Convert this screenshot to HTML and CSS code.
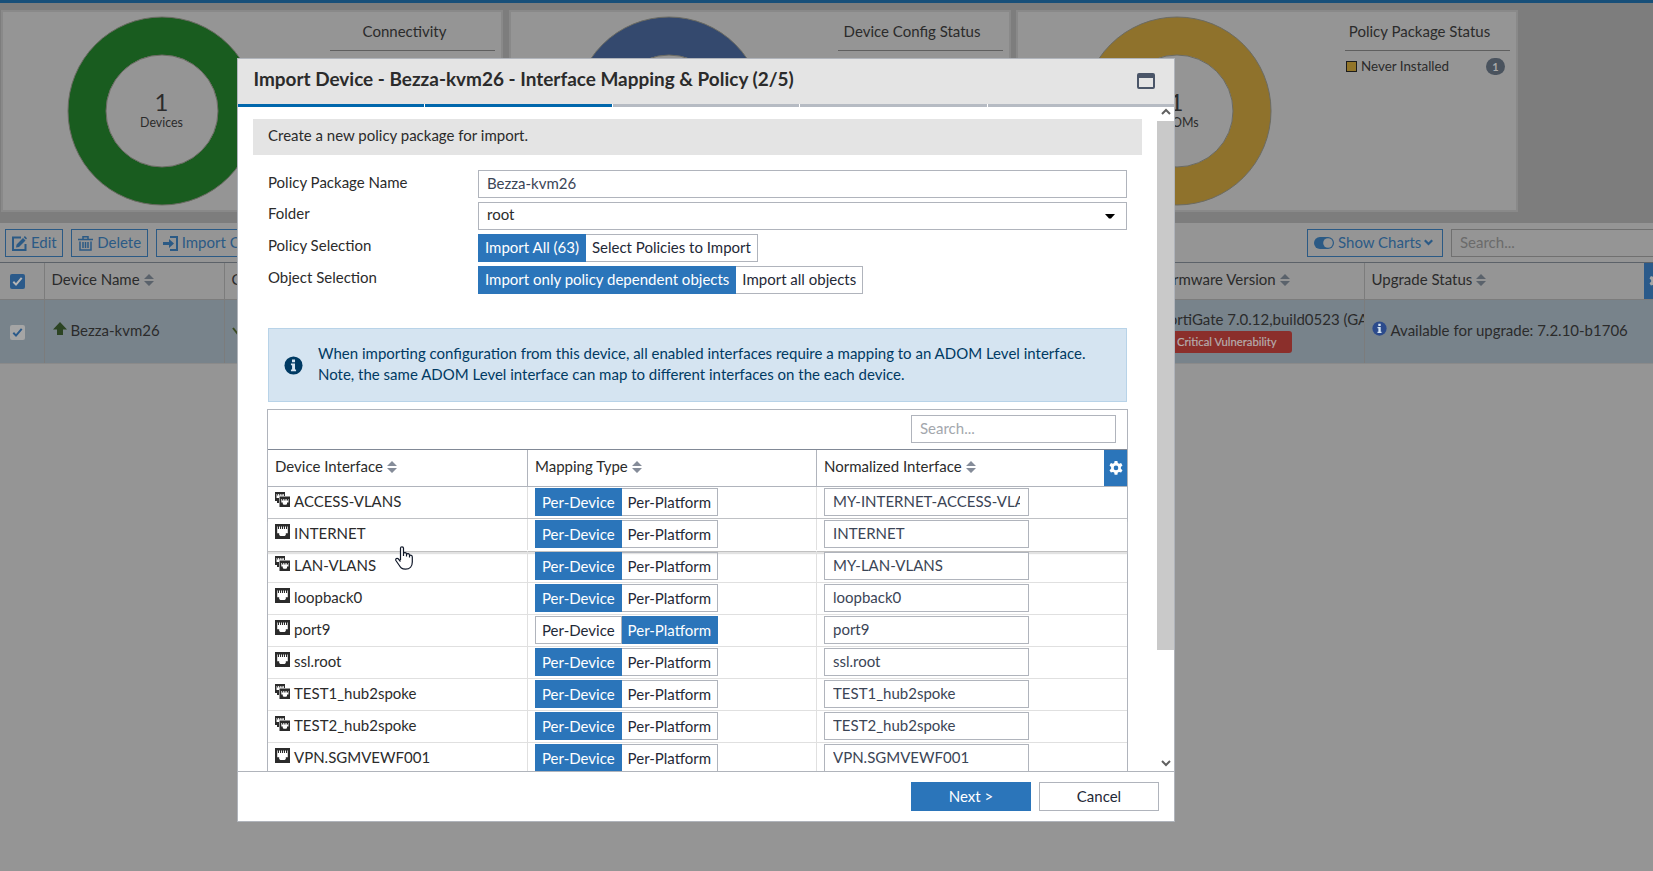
FILE: index.html
```html
<!DOCTYPE html>
<html lang="en">
<head>
<meta charset="utf-8">
<title>Import Device</title>
<link rel="stylesheet" href="styles.css">
</head>
<body>
<svg class="defs" aria-hidden="true">
  <symbol id="sort" viewBox="0 0 10 12"><path d="M0 5 5 0 10 5ZM0 7H10L5 12Z"/></symbol>
  <symbol id="gear" viewBox="0 0 16 16"><path fill-rule="evenodd" d="M6.600 1h2.800l.4 2.100 1.300.7 2-.7 1.400 2.400-1.600 1.400v1.900l1.600 1.400-1.400 2.400-2-.7-1.300.7-.4 2.100H6.600l-.4-2.100-1.300-.7-2 .7-1.400-2.400 1.600-1.400V7.100L1.500 5.500 2.900 3.100l2 .7 1.300-.7ZM8 5.600a2.300 2.300 0 1 0 0 4.600 2.300 2.300 0 0 0 0-4.600Z"/></symbol>
  <symbol id="port" viewBox="0 0 15 15"><path fill-rule="evenodd" d="M0 0H15V15H0ZM2.200 2.500V9.300H4.200V11L5.300 12H9.700L10.800 11V9.300H12.800V2.500H12.100V5H11V2.500H10V5H8.900V2.500H8V5H7V2.500H6.100V5H5V2.500H4V5H2.900V2.500Z"/></symbol>
  <symbol id="ports" viewBox="0 0 15 15"><path d="M0 0H10V4H9V2H8.300V3.500H7.500V2H6.600V3.500H5.700V2H4.800V3.500H3.900V2H3V3.500H2.200V2H1.500V6H4V11H2V9H0Z"/><path fill-rule="evenodd" d="M4.500 4.500H15V15H4.500ZM6.300 7V10.500H7.800V12L8.600 12.700H11.200L12 12V10.500H13.500V7H13V8.500H12V7H11.400V8.500H10.500V7H9.700V8.500H8.800V7H8.100V8.500H7.100V7Z"/></symbol>
  <symbol id="info" viewBox="0 0 20 20"><circle cx="10" cy="10" r="9.500"/><path class="info-i" d="M8.400 3.800h3.200v2.700H8.400ZM7.300 8h4.300v6.200h1.100V16H7.300v-1.800h1.200V9.700H7.300Z"/></symbol>
  <symbol id="check" viewBox="0 0 15 15"><path d="M3.300 7.800 6 10.600 11.700 3.800" fill="none" stroke="currentColor" stroke-width="2"/></symbol>
</svg>

<div class="page">
  <div class="topline"></div>
  <section class="charts">
    <div class="card">
      <div class="donut donut-green">
        <svg viewBox="0 0 190 190"><circle cx="95" cy="95" r="75"/><circle class="edge" cx="95" cy="95" r="94"/><circle class="edge" cx="95" cy="95" r="56"/></svg>
        <div class="donut-label"><b>1</b><span>Devices</span></div>
      </div>
      <div class="legend"><h3>Connectivity</h3></div>
    </div>
    <div class="card">
      <div class="donut donut-blue">
        <svg viewBox="0 0 190 190"><circle cx="95" cy="95" r="75"/><circle class="edge" cx="95" cy="95" r="94"/><circle class="edge" cx="95" cy="95" r="56"/></svg>
      </div>
      <div class="legend"><h3>Device Config Status</h3></div>
    </div>
    <div class="card">
      <div class="donut donut-gold">
        <svg viewBox="0 0 190 190"><circle cx="95" cy="95" r="75"/><circle class="edge" cx="95" cy="95" r="94"/><circle class="edge" cx="95" cy="95" r="56"/></svg>
        <div class="donut-label"><b>1</b><span>ADOMs</span></div>
      </div>
      <div class="legend"><h3>Policy Package Status</h3>
        <div class="legend-row"><i class="swatch"></i><span>Never Installed</span><em>1</em></div>
      </div>
    </div>
  </section>

  <div class="toolbar">
    <div class="tool"><svg width="15" height="15" viewBox="0 0 15 15"><path d="M9 1.500H1V14H13.500V8" fill="none" stroke="currentColor" stroke-width="2"/><path d="M4 11.500 4.600 8.500 11 2 13.500 4.400 7 10.900ZM11.700 1.200 12.900 0 15 2.300 14 3.600Z" fill="currentColor"/></svg><span>Edit</span></div>
    <div class="tool"><svg width="15" height="15" viewBox="0 0 15 15"><path d="M0 3.500H15M5 3V.800H10V3M2 5.500V14H13V5.500M5 6V12M7.500 6V12M10 6V12" fill="none" stroke="currentColor" stroke-width="1.500"/></svg><span>Delete</span></div>
    <div class="tool"><svg width="15" height="15" viewBox="0 0 15 15"><path d="M7 1H14V14H7" fill="none" stroke="currentColor" stroke-width="2"/><path d="M0 6H6V3L11 7.500 6 12V9H0Z" fill="currentColor"/></svg><span>Import Config</span></div>
    <div class="tool tool-charts"><svg width="20" height="12" viewBox="0 0 20 12"><rect width="20" height="12" rx="6" fill="currentColor"/><circle class="knob" cx="14" cy="6" r="4.800"/></svg><span>Show Charts</span><svg class="chev" width="9" height="7" viewBox="0 0 9 7"><path d="M.800 1.200 4.500 5 8.200 1.200" fill="none" stroke="currentColor" stroke-width="2.200"/></svg></div>
    <div class="bg-search">Search...</div>
  </div>

  <div class="grid grid-head">
    <div class="cell cell-check"><svg class="box box-on"><use href="#check"/></svg></div>
    <div class="cell">Device Name<svg class="sort"><use href="#sort"/></svg></div>
    <div class="cell">Config Status</div>
    <div class="cell cell-fw">Firmware Version<svg class="sort"><use href="#sort"/></svg></div>
    <div class="cell">Upgrade Status<svg class="sort"><use href="#sort"/></svg></div>
    <div class="bg-gear"><svg><use href="#gear"/></svg></div>
  </div>
  <div class="grid grid-row">
    <div class="cell cell-check"><svg class="box"><use href="#check"/></svg></div>
    <div class="cell"><svg class="up" width="14" height="13" viewBox="0 0 14 13"><path d="M7 0 14 7.500H10V13H4V7.500H0Z"/></svg>Bezza-kvm26</div>
    <div class="cell"><svg class="sync" width="12" height="10" viewBox="0 0 12 10"><path d="M1 3 5 8 11 1" fill="none" stroke="currentColor" stroke-width="2"/></svg></div>
    <div class="cell cell-fw"><div>FortiGate 7.0.12,build0523 (GA)</div><div class="vuln">Critical Vulnerability</div></div>
    <div class="cell"><svg class="info info-up"><use href="#info"/></svg>Available for upgrade: 7.2.10-b1706</div>
  </div>
</div>

<div class="modal">
  <header class="modal-head">
    <h2>Import Device - Bezza-kvm26 - Interface Mapping &amp; Policy (2/5)</h2>
    <svg width="18" height="16" viewBox="0 0 18 16"><rect x="1" y="1" width="16" height="14" rx="1" fill="none" stroke="#4a5568" stroke-width="2"/><path d="M1 1H17V5H1Z" fill="#4a5568"/></svg>
  </header>
  <div class="steps"><i class="done"></i><i class="done"></i><i></i><i></i><i></i></div>
  <div class="modal-body">
    <div class="content">
      <div class="banner">Create a new policy package for import.</div>
      <div class="form">
        <label>Policy Package Name</label><div class="field">Bezza-kvm26</div>
        <label>Folder</label><div class="field select">root<svg width="10" height="5" viewBox="0 0 10 5"><path d="M0 0H10L6 4.500H4Z"/></svg></div>
        <label>Policy Selection</label><div class="seg"><span class="on">Import All (63)</span><span>Select Policies to Import</span></div>
        <label>Object Selection</label><div class="seg"><span class="on">Import only policy dependent objects</span><span>Import all objects</span></div>
      </div>
      <div class="notice"><svg class="info"><use href="#info"/></svg><p>When importing configuration from this device, all enabled interfaces require a mapping to an ADOM Level interface.<br>Note, the same ADOM Level interface can map to different interfaces on the each device.</p></div>
      <div class="table">
        <div class="table-tools"><div class="search">Search...</div></div>
        <div class="tr th">
          <div>Device Interface<svg class="sort"><use href="#sort"/></svg></div>
          <div>Mapping Type<svg class="sort"><use href="#sort"/></svg></div>
          <div>Normalized Interface<svg class="sort"><use href="#sort"/></svg></div>
          <div class="gear"><svg><use href="#gear"/></svg></div>
        </div>
        <div class="tr above"><div><svg class="if"><use href="#ports"/></svg>ACCESS-VLANS</div><div class="seg"><span class="on">Per-Device</span><span>Per-Platform</span></div><div><div class="norm"><span>MY-INTERNET-ACCESS-VLANS</span></div></div></div>
        <div class="tr hover"><div><svg class="if"><use href="#port"/></svg>INTERNET</div><div class="seg"><span class="on">Per-Device</span><span>Per-Platform</span></div><div><div class="norm"><span>INTERNET</span></div></div></div>
        <div class="tr"><div><svg class="if"><use href="#ports"/></svg>LAN-VLANS</div><div class="seg"><span class="on">Per-Device</span><span>Per-Platform</span></div><div><div class="norm"><span>MY-LAN-VLANS</span></div></div></div>
        <div class="tr"><div><svg class="if"><use href="#port"/></svg>loopback0</div><div class="seg"><span class="on">Per-Device</span><span>Per-Platform</span></div><div><div class="norm"><span>loopback0</span></div></div></div>
        <div class="tr"><div><svg class="if"><use href="#port"/></svg>port9</div><div class="seg"><span>Per-Device</span><span class="on">Per-Platform</span></div><div><div class="norm"><span>port9</span></div></div></div>
        <div class="tr"><div><svg class="if"><use href="#port"/></svg>ssl.root</div><div class="seg"><span class="on">Per-Device</span><span>Per-Platform</span></div><div><div class="norm"><span>ssl.root</span></div></div></div>
        <div class="tr"><div><svg class="if"><use href="#ports"/></svg>TEST1_hub2spoke</div><div class="seg"><span class="on">Per-Device</span><span>Per-Platform</span></div><div><div class="norm"><span>TEST1_hub2spoke</span></div></div></div>
        <div class="tr"><div><svg class="if"><use href="#ports"/></svg>TEST2_hub2spoke</div><div class="seg"><span class="on">Per-Device</span><span>Per-Platform</span></div><div><div class="norm"><span>TEST2_hub2spoke</span></div></div></div>
        <div class="tr"><div><svg class="if"><use href="#port"/></svg>VPN.SGMVEWF001</div><div class="seg"><span class="on">Per-Device</span><span>Per-Platform</span></div><div><div class="norm"><span>VPN.SGMVEWF001</span></div></div></div>
      </div>
    </div>
    <div class="scroll">
      <svg width="10" height="7" viewBox="0 0 10 7"><path d="M1 6 5 2 9 6" fill="none" stroke="#606060" stroke-width="2"/></svg>
      <i class="thumb"></i>
      <svg class="down" width="10" height="7" viewBox="0 0 10 7"><path d="M1 1 5 5 9 1" fill="none" stroke="#606060" stroke-width="2"/></svg>
    </div>
  </div>
  <footer class="modal-foot"><div class="btn primary">Next &gt;</div><div class="btn">Cancel</div></footer>
</div>

<svg class="pointer" viewBox="0 0 18 24"><path d="M5.500 14V2.300C5.500.300 8.500.300 8.500 2.300V9M8.500 10V7.500C9 6 11.300 6.300 11.500 8V10.500M11.500 10V8.500C12.200 7.200 14.200 7.500 14.500 9V11.500M14.500 11V9.800C15.200 8.800 17.300 9 17.300 11V16C17.300 20 15 23.200 10.500 23.200 6.500 23.200 5.500 21.500 4 19L.900 14.500C.200 12.800 2 11.700 3.300 12.800L5.500 15.500" fill="#fff" stroke="#0f1728" stroke-width="1.200" stroke-linejoin="round"/></svg>
</body>
</html>
```
FILE: styles.css
```css
* { box-sizing: border-box; }
html, body { margin: 0; height: 100%; overflow: hidden; }
body { background: #959595; color: #2b2b2b; font: 15px/18px Lato, "Open Sans", sans-serif; white-space: nowrap; }
h2, h3, p { margin: 0; font-weight: 400; }
svg { flex: none; display: block; }
.defs { position: absolute; width: 0; height: 0; }

.page { width: 1653px; height: 871px; overflow: hidden; }
.topline { height: 3px; background: #174f79; }
.charts { display: flex; gap: 5.500px; height: 220px; padding: 7px 0 0 1px; background: #7d7d7d; }
.card { display: flex; flex: none; width: 502px; height: 202px; padding: 4px 0 0 64px; background: #959595; border: 2px solid #898989; }
.donut { position: relative; left: -.5px; width: 190px; height: 190px; }
.donut circle { fill: none; stroke-width: 38px; }
.donut .edge { stroke: #6b6b63; stroke-width: 1px; }
.donut-green circle:first-child { stroke: #195c1f; }
.donut-blue circle:first-child { stroke: #34496e; }
.donut-gold circle:first-child { stroke: #8f722c; }
.donut-label { position: absolute; inset: 73px 0 0; display: flex; flex-direction: column; align-items: center; font-size: 12.400px; line-height: 15px; }
.donut-label b { font-size: 24px; font-weight: 400; line-height: 26px; }
.legend { width: 165px; margin-left: 73px; }
.legend h3 { height: 35px; padding: 6px 16px 0 0; border-bottom: 1px solid #5f5f5f; font-size: 15px; text-align: center; }
.legend-row { display: flex; align-items: center; height: 17px; margin-top: 7px; padding: 0 5px 0 1px; font-size: 13.400px; }
.legend-row span { margin-top: -2px; }
.swatch { width: 11px; height: 11px; margin-right: 4px; background: #927529; border: 1px solid #1c1c1c; }
.legend-row em { width: 19px; height: 17px; margin-left: auto; border-radius: 9px; background: #4a535e; color: #a8a8a8; font: 700 11px/17px Lato, sans-serif; text-align: center; }

.toolbar { display: flex; gap: 8px; height: 39px; padding: 6px 0 0 5px; }
.tool { display: flex; align-items: center; gap: 4px; height: 28px; padding: 0 5.500px 0 6px; border: 1px solid #2b5a85; color: #2b5a85; }
.tool span { margin-top: -2px; }
.tool-charts { width: 136px; margin-left: auto; }
.tool-charts .chev { margin: -2px 0 0 -1px; }
.knob { fill: #959595; }
.bg-search { width: 202px; height: 28px; padding: 3px 8px; border: 1px solid #707070; border-right: 0; color: #6b6b6b; }
.grid { display: grid; grid-template-columns: 45px 180px 934px 206px 279px 9px; }
.grid-head { height: 38px; border-top: 1px solid #5c6269; border-bottom: 1px solid #7c7c7c; }
.grid-row { height: 64px; background: #78838b; border-bottom: 1px solid #8a8a8a; }
.cell { display: flex; align-items: center; min-width: 0; overflow: hidden; padding: 0 6.500px; border-right: 1px solid #7c7c7c; }
.grid-head .cell { padding-bottom: 4px; }
.grid-row .cell { padding-bottom: 3px; }
.cell:nth-child(5) { border-right: 0; }
.grid .cell-check { padding: 1px 0 0 10px; }
.grid-row .cell-check { padding-top: 2px; }
.box { width: 15px; height: 15px; border-radius: 2px; background: #a5a5a5; color: #2b5a8a; }
.box-on { background: #2b5a8a; color: #b5b5b5; }
.sort { width: 10px; height: 12px; margin: 1px 0 0 4px; fill: #5a626b; }
.bg-gear { overflow: hidden; padding: 9px 0 0 4px; background: #2b5a8a; }
.bg-gear svg { width: 16px; height: 18px; fill: #a5a5a5; }
.up { margin: -4px 4px 0 1px; fill: #2c4423; }
.sync { color: #3a4a20; }
.cell.cell-fw { padding-left: 2px; }
.grid-row .cell-fw { flex-direction: column; align-items: flex-start; padding-top: 10px; }
.vuln { height: 22px; margin-top: 3px; padding: 0 15px 0 16px; border-radius: 3px; background: #8b2f2b; color: #b5acac; font-size: 11.300px; line-height: 22px; -webkit-text-stroke: .2px #b5acac; }
.info-up { width: 15px; height: 15px; margin: -4px 4px 0 0; fill: #2c4b8c; }
.info-i { fill: #d5e4f1; }
.info-up .info-i { fill: #a5a5a5; }

.modal { position: absolute; left: 237px; top: 58px; display: flex; flex-direction: column; width: 938px; height: 764px; background: #fff; border: 1px solid #b0b4bb; }
.modal-head { display: flex; justify-content: space-between; height: 45px; padding: 9px 19px 0 15.500px; background: #e4e4e4; }
.modal-head h2 { font-size: 18.950px; line-height: 22px; font-weight: 700; }
.modal-head svg { margin-top: 5px; }
.steps { display: flex; gap: 1px; height: 3px; }
.steps i { flex: 1; background: #b6bbc3; }
.steps .done { background: #0067ac; }
.modal-body { display: flex; flex: none; height: 665px; overflow: hidden; border-bottom: 1px solid #b0b4bb; }
.content { width: 919px; padding: 12px 0 0 15px; }
.banner { width: 889px; height: 36px; padding: 7px 15px; background: #e4e4e4; }
.form { display: grid; grid-template-columns: 210px 649px; row-gap: 4px; margin: 15px 0 0 15px; }
.form label { padding-top: 3px; }
.form label:nth-of-type(n+2) { padding-top: 2px; }
.field, .norm, .search { height: 28px; padding: 3px 8px; border: 1px solid #b0b4bc; color: #3b4556; background: #fff; }
.select { display: flex; justify-content: space-between; align-items: center; padding: 0 11px 5px 8px; color: #2b2b2b; }
.select svg { margin-top: 6px; }
.seg { display: flex; }
.seg span { height: 28px; padding: 4px 6px; border: 1px solid #b0b4bc; color: #1f2937; }
.form .seg span { padding-top: 3px; }
.seg span + span { border-left: 0; }
.seg .on { border-color: #2b75ba; background: #2b75ba; color: #fff; }
.notice { display: flex; align-items: center; width: 859px; height: 74px; margin: 34px 0 0 15px; padding-left: 15px; border: 1px solid #b8d3e8; background: #d5e4f1; color: #003a63; line-height: 21px; }
.notice p { margin-top: -2px; }
.notice .info { width: 19px; height: 19px; margin-right: 15px; fill: #003a63; }
.table { width: 861px; height: 400px; margin: 7px 0 0 14px; border: 1px solid #b0b4bc; border-bottom: 0; }
.table-tools { height: 39px; padding: 5px 11px 0 0; }
.search { width: 205px; margin-left: auto; color: #a3a7ad; }
.tr { display: grid; grid-template-columns: 260px 289px 310px; height: 32px; border-bottom: 1px solid #e0e0e0; }
.tr > div { display: flex; align-items: flex-start; padding: 1px 7px 0; border-right: 1px solid #e0e0e0; }
.tr > div:nth-child(3) { border-right: 0; }
.tr > div:first-child { padding-top: 5px; }
.tr.th { grid-template-columns: 260px 289px 287px 23px; height: 38px; border-top: 1px solid #818996; border-bottom-color: #b0b4bc; }
.tr.th > div { align-items: center; padding: 0 7px 4px; border-color: #b0b4bc; }
.th .sort { fill: #858c99; margin-top: 2px; }
.tr.th .gear { padding: 0 0 0 3.500px; background: #2b75ba; border-right: 0; }
.gear svg { width: 16px; height: 18px; fill: #fff; }
.above { border-bottom-color: #bfc1c5; }
.hover { border-bottom-color: #fff; box-shadow: 0 1px 0 #c0c0c0, 0 3px 1px #e2e2e2; }
.if { width: 15px; height: 15px; margin-right: 4px; fill: #2b2b2b; }
.norm { width: 205px; }
.norm span { display: block; overflow: hidden; width: 187px; }
.scroll { display: flex; flex-direction: column; align-items: center; width: 17px; padding: 1px 0 4px; }
.thumb { width: 17px; height: 529px; margin-top: 6px; background: #c9c9c9; }
.down { margin-top: auto; }
.modal-foot { display: flex; justify-content: flex-end; gap: 8px; padding: 10px 15px; }
.btn { width: 120px; height: 29px; padding-top: 4px; border: 1px solid #b0b4bc; color: #1f2937; text-align: center; }
.primary { border-color: #2b75ba; background: #2b75ba; color: #fff; }
.pointer { position: absolute; left: 395px; top: 546px; width: 18px; height: 24px; }
```
